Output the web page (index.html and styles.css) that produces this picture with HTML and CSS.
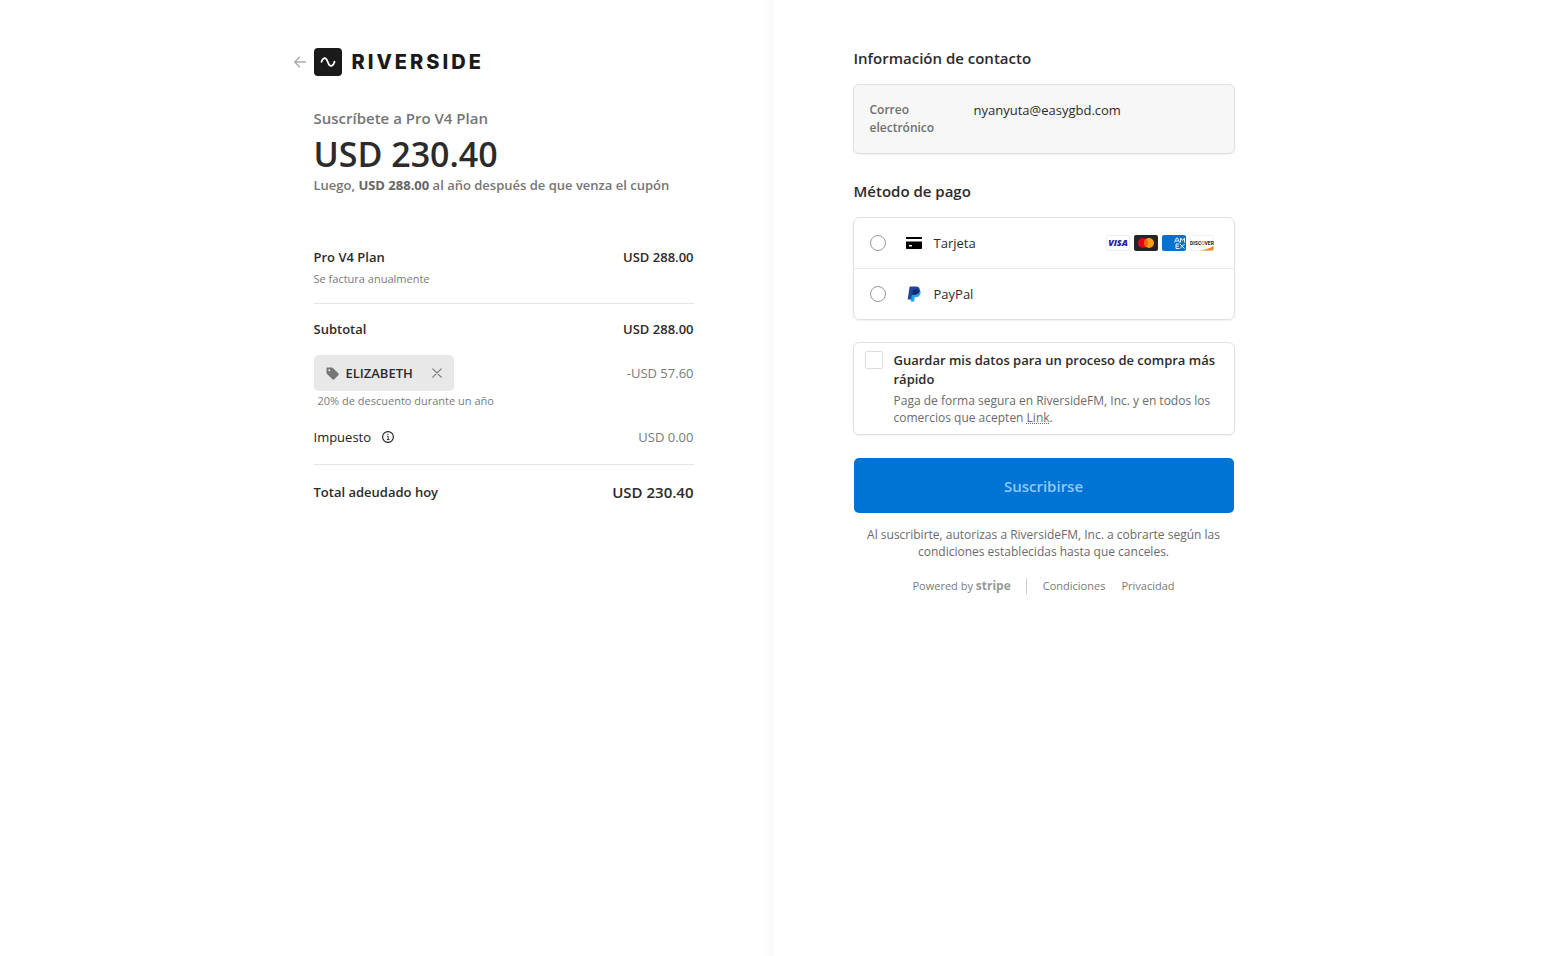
FILE: index.html
```html
<!DOCTYPE html>
<html lang="es">
	<head>
		<meta charset="UTF-8" />
		<meta name="viewport" content="width=device-width, initial-scale=1.0" />
		<title>Riverside</title>
		<link rel="stylesheet" href="styles.css" />
	</head>

	<body>
		<div class="checkout">
			<section class="overview">
				<div class="column">
					<header class="brand">
						<a class="back" href="#" aria-label="Volver">
							<svg width="12" height="12" viewBox="0 0 12 12" fill="none" stroke="#aaa" stroke-width="1.4" stroke-linecap="round" stroke-linejoin="round">
								<path d="M11.3 6H.8M5.3 1.3.8 6l4.5 4.7" />
							</svg>
						</a>
						<svg width="28" height="28" viewBox="0 0 28 28">
							<rect width="28" height="28" rx="4" fill="#1a1a1a" />
							<path d="M7.5 13.8c1.1-3.2 3-4.4 4.5-3.1 1.4 1.1 1.8 4.5 3.2 6.2 1.7 2 4.3.5 5.3-3.2" fill="none" stroke="#fff" stroke-width="1.8" stroke-linecap="round" />
						</svg>
						<span class="brand-name">RIVERSIDE</span>
					</header>

					<h1 class="plan-title">Suscríbete a Pro V4 Plan</h1>
					<div class="amount">USD 230.40</div>
					<p class="amount-note">Luego, <b>USD 288.00</b> al año después de que venza el cupón</p>

					<div class="lines">
						<div class="line strong">
							<span>Pro V4 Plan</span>
							<span class="price">USD 288.00</span>
						</div>
						<p class="hint">Se factura anualmente</p>
						<hr />
						<div class="line strong">
							<span>Subtotal</span>
							<span class="price">USD 288.00</span>
						</div>
						<div class="line coupon-line">
							<span class="coupon">
								<svg width="13" height="13" viewBox="0 0 13 13">
									<path fill="#777" fill-rule="evenodd" d="M1 .5h4.7c.5 0 .9.2 1.2.5l5.4 5.3c.6.6.6 1.4 0 2l-3.9 3.9c-.6.6-1.4.6-2 0L1 6.9A1.7 1.7 0 0 1 .5 5.7V1c0-.3.2-.5.5-.5ZM3.3 2.3a1 1 0 1 0 0 2 1 1 0 0 0 0-2Z" />
								</svg>
								ELIZABETH
								<button class="coupon-remove" type="button" aria-label="Quitar cupón">
									<svg width="10" height="10" viewBox="0 0 10 10" stroke="#777" stroke-width="1.2" stroke-linecap="round">
										<path d="m.8.8 8.4 8.4M9.2.8.8 9.2" />
									</svg>
								</button>
							</span>
							<span class="price muted">-USD 57.60</span>
						</div>
						<p class="hint coupon-hint">20% de descuento durante un año</p>
						<div class="line tax">
							<span class="tax-label">
								Impuesto
								<svg width="12" height="12" viewBox="0 0 12 12" fill="none" stroke="#1a1a1a">
									<circle cx="6" cy="6" r="5.4" stroke-width="1.1" />
									<path d="M5 5.4h1.2v3.2M4.8 8.6h2.7M6 2.8v1.2" stroke-width=".9" />
								</svg>
							</span>
							<span class="price muted">USD 0.00</span>
						</div>
						<hr />
						<div class="line strong total">
							<span>Total adeudado hoy</span>
							<span class="price">USD 230.40</span>
						</div>
					</div>
				</div>
			</section>

			<main class="payment">
				<form class="column">
					<h2>Información de contacto</h2>
					<div class="box contact">
						<span class="contact-label">Correo electrónico</span>
						<span class="contact-value">nyanyuta@easygbd.com</span>
					</div>

					<h2>Método de pago</h2>
					<div class="box methods">
						<label class="method">
							<input type="radio" name="method" value="card" />
							<svg class="method-icon" width="16" height="16" viewBox="0 0 16 16">
								<path fill="#000" fill-rule="evenodd" d="M0 4V3c0-.6.4-1 1-1h14c.6 0 1 .4 1 1v1H0Zm0 2.5h16V13c0 .6-.4 1-1 1H1c-.6 0-1-.4-1-1V6.5ZM3 10v1.5h3V10H3Z" />
							</svg>
							<span>Tarjeta</span>
							<span class="cards">
								<svg width="24" height="16" viewBox="0 0 24 16">
									<rect x=".5" y=".5" width="23" height="15" rx="1.5" fill="#fff" stroke="#eee" />
									<text x="12" y="11" text-anchor="middle" class="visa">VISA</text>
								</svg>
								<svg width="24" height="16" viewBox="0 0 24 16">
									<rect width="24" height="16" rx="2" fill="#252525" />
									<circle cx="9" cy="8" r="5" fill="#eb001b" />
									<circle cx="15" cy="8" r="5" fill="#f79e1b" />
									<path fill="#ff5f00" d="M12 4a5 5 0 0 1 0 8 5 5 0 0 1 0-8Z" />
								</svg>
								<svg width="24" height="16" viewBox="0 0 24 16">
									<rect width="24" height="16" rx="2" fill="#0870ce" />
									<path fill="none" stroke="#fff" stroke-width=".9" d="m12.5 7.5 2-4.5h1l2 4.5M13.5 6h3M18.5 7.5V3l2 2.5 2-2.5v4.5M17.3 9H14v4.500h3.3M14 11.2h3M18 9l4.5 4.5M22.5 9 18 13.5" />
								</svg>
								<svg width="24" height="16" viewBox="0 0 24 16">
									<rect x=".5" y=".5" width="23" height="15" rx="1.5" fill="#fff" stroke="#f1f1f1" />
									<path fill="#e8852a" d="M23.5 11c-3 2-8 3.6-14 4.5H22c.8 0 1.5-.7 1.5-1.5v-3Z" />
									<text x="12" y="9.5" text-anchor="middle" class="discover">DISC<tspan fill="#f27712">O</tspan>VER</text>
								</svg>
							</span>
						</label>
						<label class="method">
							<input type="radio" name="method" value="paypal" />
							<svg class="method-icon" width="16" height="16" viewBox="0 0 16 16">
								<path fill="#28a0e5" d="M13.6 4.1c1 .8 1.2 1.9.9 3.2-.6 2.7-2.3 3.9-4.9 3.9h-.8L8.1 15.4H4.7l.4-2.7 1.7-8.6h6.8Z" />
								<path fill="#20449a" d="M4.2.6h5.500c3 0 4.5 1.5 3.9 4.1-.6 2.7-2.4 4-5.3 4H6.1L5.2 13.4H1.7L3.5 1.2c.1-.4.3-.6.7-.6Z" />
								<path fill="#142c74" d="M7 4.2c.1-.4.4-.6.8-.6h3.8c.8 0 1.5.1 2.1.5-.5 3-2.3 4.6-5.4 4.6H6.1L7 4.2Z" />
							</svg>
							<span>PayPal</span>
						</label>
					</div>

					<div class="box save">
						<input type="checkbox" id="saveData" />
						<div>
							<label class="save-title" for="saveData">Guardar mis datos para un proceso de compra más rápido</label>
							<p class="save-text">Paga de forma segura en RiversideFM, Inc. y en todos los comercios que acepten <a href="#">Link</a>.</p>
						</div>
					</div>

					<button class="submit" type="submit">Suscribirse</button>
					<p class="terms">Al suscribirte, autorizas a RiversideFM, Inc. a cobrarte según las condiciones establecidas hasta que canceles.</p>

					<footer class="footer">
						<a class="powered" href="#">Powered by <b>stripe</b></a>
						<a href="#">Condiciones</a>
						<a href="#">Privacidad</a>
					</footer>
				</form>
			</main>
		</div>
	</body>
</html>
```
FILE: styles.css
```css
* {
	box-sizing: border-box;
}

body {
	margin: 0;
	font-family: 'Segoe UI', 'Open Sans', 'Noto Sans', sans-serif;
	font-size: 13px;
	line-height: 18px;
	color: #2b2b2b;
	background: #fff;
}

h1,
h2,
p {
	margin: 0;
}

a {
	color: inherit;
	text-decoration: none;
}

svg {
	flex: none;
	display: block;
}

.checkout {
	display: grid;
	grid-template-columns: 1fr 1fr;
	min-height: 100vh;
}

.overview,
.payment {
	display: flex;
	padding: 48px 80px;
}

.overview {
	justify-content: flex-end;
	background: linear-gradient(to left, #fafafa, #fff 14px);
}

.column {
	width: 100%;
	max-width: 380px;
}

.brand {
	display: flex;
	align-items: center;
	margin-left: -20px;
	margin-bottom: 32px;
}

.back {
	margin-right: 8px;
}

.brand-name {
	margin-left: 10px;
	font-family: Inter, sans-serif;
	font-size: 20px;
	font-weight: 800;
	line-height: 28px;
	letter-spacing: 3px;
	color: #1a1a1a;
}

.plan-title {
	font-size: 15px;
	font-weight: 600;
	line-height: 20px;
	color: #757575;
}

.amount {
	font-size: 34px;
	font-weight: 600;
	line-height: 52px;
}

.amount-note {
	font-weight: 600;
	line-height: 10px;
	color: #757575;
}

.amount-note b {
	font-weight: 700;
	color: #666;
}

.lines {
	margin-top: 58px;
}

.line {
	display: flex;
	align-items: center;
	justify-content: space-between;
}

.strong {
	font-weight: 600;
}

.hint {
	margin-top: 4px;
	font-size: 11px;
	color: #7a7a7a;
}

.muted {
	color: #7a7a7a;
}

hr {
	height: 1px;
	margin: 18px 0;
	border: 0;
	background: #e4e4e4;
}

.hint + hr {
	margin: 15px 0 16px;
}

.coupon-line {
	margin-top: 17px;
}

.coupon {
	display: flex;
	align-items: center;
	gap: 7px;
	height: 36px;
	padding: 0 12px;
	border-radius: 5px;
	background: #e8e8e8;
	font-weight: 600;
}

.coupon-remove {
	margin-left: 12px;
	padding: 0;
	border: none;
	background: none;
	cursor: pointer;
}

.coupon-hint {
	margin-top: 1px;
	padding-left: 4px;
}

.tax {
	margin-top: 18px;
}

.tax-label {
	display: flex;
	align-items: center;
	gap: 11px;
	color: #1a1a1a;
}

.total .price {
	font-size: 15px;
}

h2 {
	font-size: 15px;
	font-weight: 600;
	line-height: 20px;
}

.box {
	margin: 0 -1px;
	border: 1px solid #e0e0e0;
	border-radius: 6px;
	box-shadow: 0 1px 2px rgba(0, 0, 0, 0.06);
}

.contact {
	display: flex;
	gap: 24px;
	margin-top: 16px;
	margin-bottom: 27px;
	padding: 16px;
	background: #f7f7f7;
}

.contact-label {
	width: 80px;
	font-size: 12px;
	font-weight: 600;
	color: #6f6f6f;
}

.methods {
	margin-top: 16px;
}

.method {
	display: flex;
	align-items: center;
	height: 50px;
	padding: 0 20px 0 16px;
	cursor: pointer;
}

.method + .method {
	height: 51px;
	border-top: 1px solid #ebebeb;
}

.method input {
	appearance: none;
	width: 16px;
	height: 16px;
	margin: 0;
	border: 1px solid #999;
	border-radius: 50%;
}

.method input:checked {
	border: 5px solid #0074d4;
}

.method-icon {
	margin: 0 12px 0 20px;
}

.cards {
	display: flex;
	gap: 4px;
	margin-left: auto;
}

.visa {
	font-family: 'Open Sans', sans-serif;
	font-size: 9px;
	font-style: italic;
	font-weight: 800;
	fill: #1a1f9c;
}

.discover {
	font-family: Roboto, sans-serif;
	font-size: 5px;
	font-weight: 700;
	fill: #222;
}

.save {
	display: flex;
	gap: 11px;
	margin-top: 22px;
	padding: 8px 11px;
}

.save input {
	appearance: none;
	flex: none;
	width: 18px;
	height: 18px;
	margin: 0;
	border: 1px solid #ddd;
	border-radius: 2px;
}

.save input:checked {
	background: #0074d4;
}

.save-title {
	display: block;
	font-weight: 600;
	line-height: 19px;
}

.save-text {
	margin-top: 3px;
	font-size: 12px;
	line-height: 17px;
	color: #6a6a6a;
}

.save-text a {
	text-decoration: underline dotted;
}

.submit {
	display: block;
	width: 100%;
	height: 55px;
	margin-top: 23px;
	border: none;
	border-radius: 5px;
	background: #0074d4;
	font-family: inherit;
	font-size: 15px;
	font-weight: 600;
	color: #93c8f5;
	cursor: pointer;
}

.terms {
	margin-top: 13px;
	font-size: 12px;
	line-height: 17px;
	text-align: center;
	color: #6a6a6a;
}

.footer {
	display: flex;
	justify-content: center;
	gap: 16px;
	margin-top: 18px;
	font-size: 11px;
	line-height: 16px;
	color: #7a7a7a;
}

.powered {
	padding-right: 15px;
	border-right: 1px solid #ccc;
}

.powered b {
	font-size: 12px;
	color: #999;
}
```
